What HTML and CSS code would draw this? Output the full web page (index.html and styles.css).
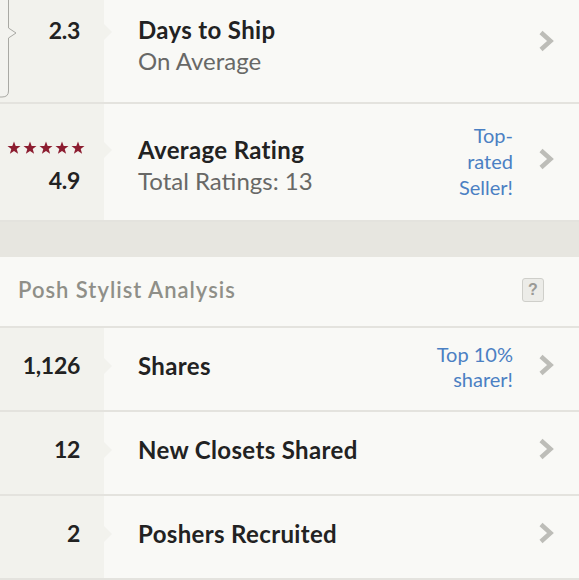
FILE: index.html
```html
<!DOCTYPE html>
<html lang="en">
<head>
<meta charset="utf-8">
<title>Seller Stats</title>
<link rel="stylesheet" href="styles.css">
</head>
<body>
<div class="page">
  <section class="group group-top">
    <div class="row row-tall first">
      <div class="stat"><span class="num">2.3</span></div>
      <div class="label">
        <div class="title">Days to Ship</div>
        <div class="sub">On Average</div>
      </div>
      <div class="note"></div>
      <div class="chev"><svg width="16" height="22" viewBox="0 0 16 22"><polyline points="3,2.5 12.5,11 3,19.5" fill="none" stroke="#bdbdb8" stroke-width="4.5"/></svg></div>
      <svg class="bubble" width="20" height="100" viewBox="0 0 20 100"><path d="M0,0 H8 V28 L16,33 L8,38 V91 Q8,97 2,97 H0 Z" fill="#f3f3ef" stroke="none"/><path d="M8.5,0 V28 L16,33 L8.5,38 V91 Q8.5,97 2,97 H0" fill="none" stroke="#a9a9a4" stroke-width="1"/></svg>
    </div>
    <div class="row row-tall">
      <div class="stat">
        <div class="stars">
          <svg width="78" height="14" viewBox="0 0 78 14">
            <defs><path id="st" d="M7,0.5 L8.7,5 L13.5,5.1 L9.7,8.1 L11.1,12.8 L7,10 L2.9,12.8 L4.3,8.1 L0.5,5.1 L5.3,5 Z"/></defs>
            <use href="#st" x="0" fill="#8c1d30"/>
            <use href="#st" x="16" fill="#8c1d30"/>
            <use href="#st" x="32" fill="#8c1d30"/>
            <use href="#st" x="48" fill="#8c1d30"/>
            <use href="#st" x="64" fill="#8c1d30"/>
          </svg>
        </div>
        <span class="num">4.9</span>
      </div>
      <div class="label">
        <div class="title">Average Rating</div>
        <div class="sub">Total Ratings: 13</div>
      </div>
      <div class="note note-3">Top-<br>rated<br>Seller!</div>
      <div class="chev"><svg width="16" height="22" viewBox="0 0 16 22"><polyline points="3,2.5 12.5,11 3,19.5" fill="none" stroke="#bdbdb8" stroke-width="4.5"/></svg></div>
    </div>
  </section>
  <div class="band"></div>
  <section class="group">
    <div class="header">
      <h2>Posh Stylist Analysis</h2>
      <span class="help">?</span>
    </div>
    <div class="row row-short">
      <div class="stat"><span class="num">1,126</span></div>
      <div class="label"><div class="title">Shares</div></div>
      <div class="note">Top 10%<br>sharer!</div>
      <div class="chev"><svg width="16" height="22" viewBox="0 0 16 22"><polyline points="3,2.5 12.5,11 3,19.5" fill="none" stroke="#bdbdb8" stroke-width="4.5"/></svg></div>
    </div>
    <div class="row row-short">
      <div class="stat"><span class="num">12</span></div>
      <div class="label"><div class="title">New Closets Shared</div></div>
      <div class="note"></div>
      <div class="chev"><svg width="16" height="22" viewBox="0 0 16 22"><polyline points="3,2.5 12.5,11 3,19.5" fill="none" stroke="#bdbdb8" stroke-width="4.5"/></svg></div>
    </div>
    <div class="row row-short">
      <div class="stat"><span class="num">2</span></div>
      <div class="label"><div class="title">Poshers Recruited</div></div>
      <div class="note"></div>
      <div class="chev"><svg width="16" height="22" viewBox="0 0 16 22"><polyline points="3,2.5 12.5,11 3,19.5" fill="none" stroke="#bdbdb8" stroke-width="4.5"/></svg></div>
    </div>
  </section>
</div>
</body>
</html>
```
FILE: styles.css
```css
html, body {
  margin: 0;
  padding: 0;
  background: #f9f9f6;
}
body {
  font-family: "Lato", "Liberation Sans", sans-serif;
  color: #222;
  overflow: hidden;
}
.page {
  width: 579px;
  height: 580px;
  overflow: hidden;
}
.group-top {
  margin-top: -14px;
}
.row {
  position: relative;
  display: grid;
  grid-template-columns: 104px 1fr auto 66px;
  border-bottom: 2px solid #e4e3de;
  background: #f9f9f6;
}
.row-tall { height: 116px; }
.row-short { height: 82px; }
.stat {
  position: relative;
  background: #f2f2ed;
  display: flex;
  flex-direction: column;
  align-items: flex-end;
  justify-content: center;
  padding-right: 24px;
}
.row-tall .stat {
  justify-content: flex-start;
  padding-top: 30px;
}
.row-tall.first .stat { padding-top: 29px; }
.row-short .stat { padding-bottom: 7px; }
.stat::after {
  content: "";
  position: absolute;
  right: -8px;
  top: 50%;
  margin-top: -11px;
  border-top: 8px solid transparent;
  border-bottom: 8px solid transparent;
  border-left: 8px solid #f2f2ed;
}
.row-tall .stat::after { top: 38px; margin-top: 0; }
.num {
  font-weight: 700;
  font-size: 23px;
  line-height: 31px;
  letter-spacing: -0.3px;
  color: #222;
}
.stars {
  margin-right: -5px;
  height: 31px;
  display: flex;
  align-items: center;
}
.stars svg { display: block; margin-top: -3px; }
.label {
  padding-left: 34px;
  display: flex;
  flex-direction: column;
  justify-content: center;
}
.row-tall .label {
  justify-content: flex-start;
  padding-top: 30px;
}
.row-tall.first .label { padding-top: 28px; }
.row-short .label { padding-bottom: 7px; }
.title {
  font-weight: 700;
  font-size: 24px;
  line-height: 31px;
  letter-spacing: 0.35px;
  color: #222;
}
.sub {
  font-size: 24px;
  line-height: 31px;
  color: #686866;
}
.note {
  align-self: center;
  text-align: right;
  color: #4b80c3;
  font-size: 20px;
  line-height: 25px;
  padding-bottom: 4px;
}
.note-3 { line-height: 26px; padding-bottom: 2px; }
.chev {
  display: flex;
  align-items: center;
  padding-left: 25px;
}
.row-tall .chev { padding-bottom: 6px; }
.row-short .chev { padding-bottom: 8px; }
.chev svg { display: block; }
.bubble {
  position: absolute;
  left: 0;
  top: 14px;
}
.band {
  height: 35px;
  background: #e7e6e0;
}
.header {
  height: 69px;
  border-bottom: 2px solid #e4e3de;
  display: flex;
  align-items: center;
  justify-content: space-between;
  padding: 0 35px 0 18px;
}
.header h2 {
  margin: 0 0 4px;
  font-size: 22px;
  font-weight: 600;
  letter-spacing: 1px;
  color: #8f8f88;
}
.help {
  width: 20px;
  height: 22px;
  margin-bottom: 4px;
  border: 1px solid #cfcfca;
  border-radius: 3px;
  background: #ececE8;
  color: #9a9a96;
  font-family: "Liberation Sans", sans-serif;
  font-weight: 700;
  font-size: 16px;
  display: flex;
  align-items: center;
  justify-content: center;
}
```
